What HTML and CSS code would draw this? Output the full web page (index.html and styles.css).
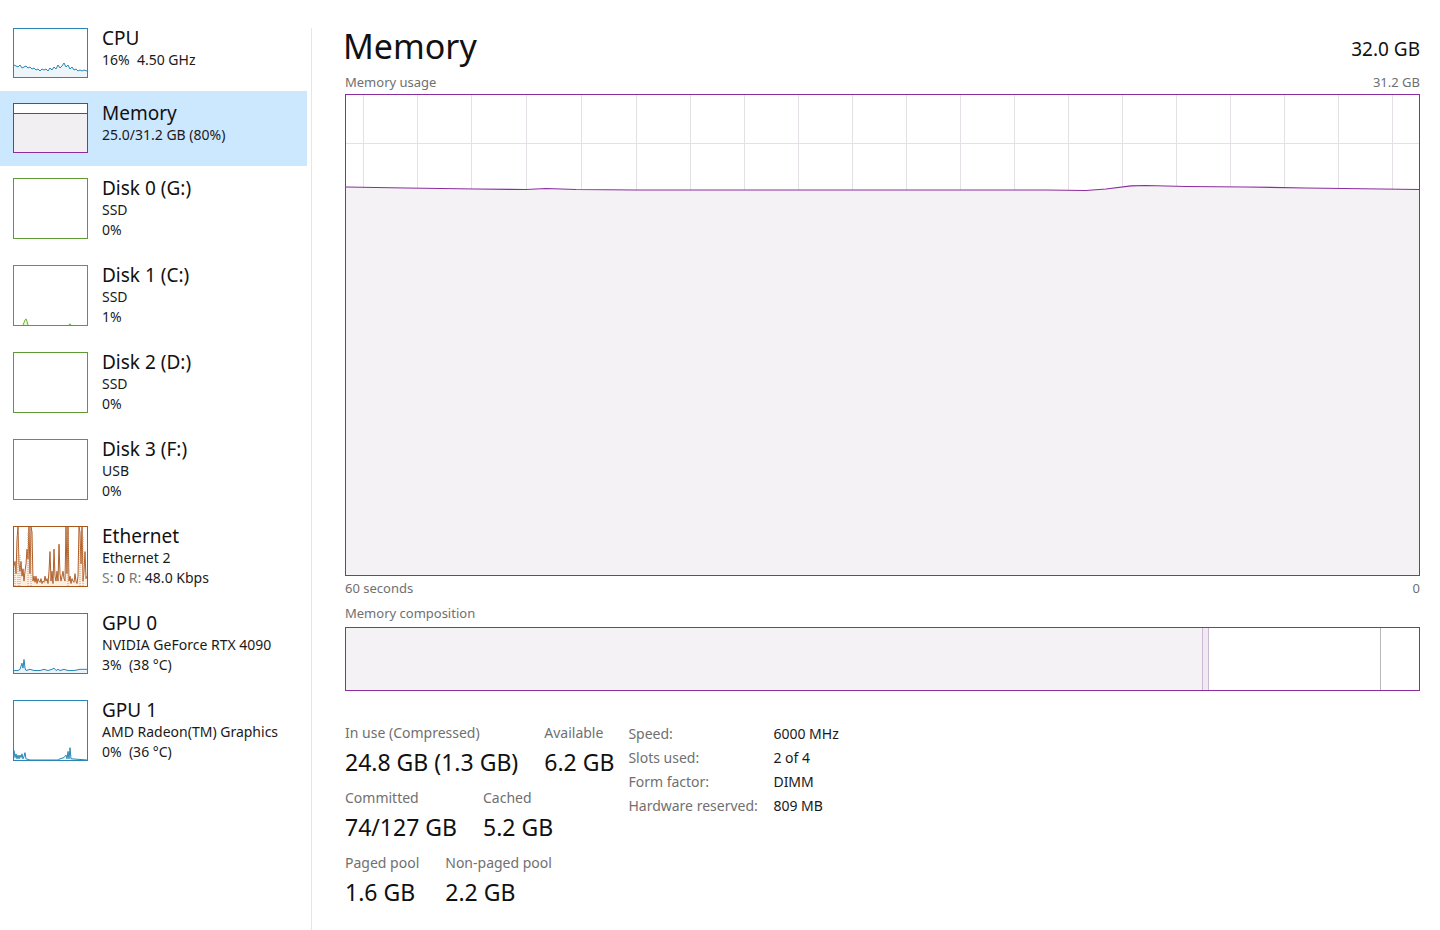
FILE: index.html
```html
<!DOCTYPE html>
<html lang="en">
<head>
<meta charset="utf-8">
<title>Task Manager - Memory</title>
<link rel="stylesheet" href="styles.css">
</head>
<body>
<div class="app">
  <nav class="sidebar">
    <div class="item">
      <div class="thumb thumb-cpu">
        <svg viewBox="0 0 73 48" preserveAspectRatio="none">
          <polygon class="fill-cpu" points="0,48 0,36 2,37 4,38 6,36 8,39 10,38 12,37 14,39 16,38 18,40 20,39 22,41 24,40 26,42 28,40 30,41 32,40 34,42 36,39 38,41 40,38 42,40 44,36 46,39 48,37 50,34 52,38 54,36 56,40 58,38 60,41 62,40 64,42 66,41 68,42 70,41 73,42 73,48"/>
          <polyline class="line-cpu" points="0,36 2,37 4,38 6,36 8,39 10,38 12,37 14,39 16,38 18,40 20,39 22,41 24,40 26,42 28,40 30,41 32,40 34,42 36,39 38,41 40,38 42,40 44,36 46,39 48,37 50,34 52,38 54,36 56,40 58,38 60,41 62,40 64,42 66,41 68,42 70,41 73,42"/>
        </svg>
      </div>
      <div class="info">
        <div class="name">CPU</div>
        <div class="sub">16%&nbsp; 4.50 GHz</div>
      </div>
    </div>
    <div class="item selected">
      <div class="thumb thumb-mem">
        <svg viewBox="0 0 73 48" preserveAspectRatio="none">
          <rect class="fill-mem" x="0" y="9.5" width="73" height="38.5"/>
          <line class="line-mem" x1="0" y1="9.5" x2="73" y2="9.5"/>
        </svg>
      </div>
      <div class="info">
        <div class="name">Memory</div>
        <div class="sub">25.0/31.2 GB (80%)</div>
      </div>
    </div>
    <div class="item tall">
      <div class="thumb thumb-disk"></div>
      <div class="info">
        <div class="name">Disk 0 (G:)</div>
        <div class="sub">SSD</div>
        <div class="sub">0%</div>
      </div>
    </div>
    <div class="item tall">
      <div class="thumb thumb-disk">
        <svg viewBox="0 0 73 48" preserveAspectRatio="none">
          <polyline class="line-disk" points="9,48 10,46 11,44 12,43 13,45 14,48"/>
          <polyline class="line-disk" points="55,48 56,47 57,48"/>
        </svg>
      </div>
      <div class="info">
        <div class="name">Disk 1 (C:)</div>
        <div class="sub">SSD</div>
        <div class="sub">1%</div>
      </div>
    </div>
    <div class="item tall">
      <div class="thumb thumb-disk"></div>
      <div class="info">
        <div class="name">Disk 2 (D:)</div>
        <div class="sub">SSD</div>
        <div class="sub">0%</div>
      </div>
    </div>
    <div class="item tall">
      <div class="thumb thumb-disk"></div>
      <div class="info">
        <div class="name">Disk 3 (F:)</div>
        <div class="sub">USB</div>
        <div class="sub">0%</div>
      </div>
    </div>
    <div class="item tall">
      <div class="thumb thumb-eth">
        <svg viewBox="0 0 73 48" preserveAspectRatio="none">
          <polygon class="fill-eth" points="0,48 0,32 1,28 2,38 3,10 4,0 5,30 6,36 7,28 8,40 9,34 10,44 11,36 12,30 13,18 14,26 15,0 16,38 17,0 18,4 19,44 20,40 21,45 22,40 23,46 24,42 25,44 26,45 27,42 28,46 29,44 30,45 31,40 32,44 33,42 34,46 35,36 36,20 37,44 38,36 39,46 40,18 41,40 42,44 43,36 44,44 45,14 46,38 47,44 48,40 49,36 50,42 51,44 52,0 53,38 54,0 55,44 56,40 57,46 58,42 59,44 60,45 61,38 62,44 63,46 64,40 65,0 66,4 67,30 68,0 69,44 70,36 71,20 72,42 73,40 73,48"/>
          <polyline class="line-eth" points="0,32 1,28 2,38 3,10 4,0 5,30 6,36 7,28 8,40 9,34 10,44 11,36 12,30 13,18 14,26 15,0 16,38 17,0 18,4 19,44 20,40 21,45 22,40 23,46 24,42 25,44 26,45 27,42 28,46 29,44 30,45 31,40 32,44 33,42 34,46 35,36 36,20 37,44 38,36 39,46 40,18 41,40 42,44 43,36 44,44 45,14 46,38 47,44 48,40 49,36 50,42 51,44 52,0 53,38 54,0 55,44 56,40 57,46 58,42 59,44 60,45 61,38 62,44 63,46 64,40 65,0 66,4 67,30 68,0 69,44 70,36 71,20 72,42 73,40"/>
          <polyline class="dot-eth" points="1,48 1,30"/>
          <polyline class="dot-eth" points="4,48 4,6"/>
          <polyline class="dot-eth" points="6,48 6,22"/>
          <polyline class="dot-eth" points="14,48 14,4"/>
          <polyline class="dot-eth" points="17,48 17,6"/>
          <polyline class="dot-eth" points="54,48 54,6"/>
          <polyline class="dot-eth" points="66,48 66,6"/>
          <polyline class="dot-eth" points="69,48 69,8"/>
        </svg>
      </div>
      <div class="info">
        <div class="name">Ethernet</div>
        <div class="sub">Ethernet 2</div>
        <div class="sub"><span class="dim">S:</span> 0 <span class="dim">R:</span> 48.0 Kbps</div>
      </div>
    </div>
    <div class="item tall">
      <div class="thumb thumb-gpu">
        <svg viewBox="0 0 73 48" preserveAspectRatio="none">
          <polygon class="fill-gpu" points="0,48 0,46 4,46 6,45 8,40 9,44 10,37 11,44 12,46 16,45 20,46 26,46 30,45 34,46 38,45 40,44 42,46 44,45 46,46 50,45 54,46 60,46 66,45 73,45 73,48"/>
          <polyline class="line-gpu" points="0,46 4,46 6,45 8,40 9,44 10,37 11,44 12,46 16,45 20,46 26,46 30,45 34,46 38,45 40,44 42,46 44,45 46,46 50,45 54,46 60,46 66,45 73,45"/>
        </svg>
      </div>
      <div class="info">
        <div class="name">GPU 0</div>
        <div class="sub">NVIDIA GeForce RTX 4090</div>
        <div class="sub">3%&nbsp; (38 °C)</div>
      </div>
    </div>
    <div class="item tall">
      <div class="thumb thumb-gpu">
        <svg viewBox="0 0 73 48" preserveAspectRatio="none">
          <polygon class="fill-gpu" points="0,48 0,40 1,46 2,43 3,47 4,44 5,47 6,44 7,46 8,43 9,47 10,45 11,42 12,47 16,48 44,48 46,47 50,46 52,44 53,47 54,41 55,47 56,38 57,47 73,48"/>
          <polyline class="line-gpu" points="0,40 1,46 2,43 3,47 4,44 5,47 6,44 7,46 8,43 9,47 10,45 11,42 12,47 16,48 44,48 46,47 50,46 52,44 53,47 54,41 55,47 56,38 57,47 73,48"/>
        </svg>
      </div>
      <div class="info">
        <div class="name">GPU 1</div>
        <div class="sub">AMD Radeon(TM) Graphics</div>
        <div class="sub">0%&nbsp; (36 °C)</div>
      </div>
    </div>
  </nav>

  <div class="divider"></div>

  <main class="main">
    <header class="head">
      <h1 class="title">Memory</h1>
      <div class="total">32.0 GB</div>
    </header>

    <div class="chart-labels">
      <span>Memory usage</span>
      <span>31.2 GB</span>
    </div>
    <div class="chart">
      <svg class="chart-svg" viewBox="0 0 1073 480" preserveAspectRatio="none">
        <g class="grid">
          <line x1="17.5" y1="0" x2="17.5" y2="480"/>
          <line x1="71.5" y1="0" x2="71.5" y2="480"/>
          <line x1="125.5" y1="0" x2="125.5" y2="480"/>
          <line x1="180.5" y1="0" x2="180.5" y2="480"/>
          <line x1="235.5" y1="0" x2="235.5" y2="480"/>
          <line x1="290.5" y1="0" x2="290.5" y2="480"/>
          <line x1="344.5" y1="0" x2="344.5" y2="480"/>
          <line x1="398.5" y1="0" x2="398.5" y2="480"/>
          <line x1="452.5" y1="0" x2="452.5" y2="480"/>
          <line x1="506.5" y1="0" x2="506.5" y2="480"/>
          <line x1="560.5" y1="0" x2="560.5" y2="480"/>
          <line x1="614.5" y1="0" x2="614.5" y2="480"/>
          <line x1="668.5" y1="0" x2="668.5" y2="480"/>
          <line x1="722.5" y1="0" x2="722.5" y2="480"/>
          <line x1="776.5" y1="0" x2="776.5" y2="480"/>
          <line x1="830.5" y1="0" x2="830.5" y2="480"/>
          <line x1="884.5" y1="0" x2="884.5" y2="480"/>
          <line x1="938.5" y1="0" x2="938.5" y2="480"/>
          <line x1="992.5" y1="0" x2="992.5" y2="480"/>
          <line x1="1046.5" y1="0" x2="1046.5" y2="480"/>
          <line x1="0" y1="48.5" x2="1073" y2="48.5"/>
          <line x1="0" y1="96.5" x2="1073" y2="96.5"/>
          <line x1="0" y1="144.5" x2="1073" y2="144.5"/>
          <line x1="0" y1="192.5" x2="1073" y2="192.5"/>
          <line x1="0" y1="240.5" x2="1073" y2="240.5"/>
          <line x1="0" y1="288.5" x2="1073" y2="288.5"/>
          <line x1="0" y1="336.5" x2="1073" y2="336.5"/>
          <line x1="0" y1="384.5" x2="1073" y2="384.5"/>
          <line x1="0" y1="432.5" x2="1073" y2="432.5"/>
        </g>
        <polygon class="usage-fill" points="0,480 0,92 60,93 130,94 180,94.5 200,93.5 230,94.5 290,95 700,95 740,95.5 760,94 785,90.8 800,90.5 840,91.5 900,92 960,93 1073,94.5 1073,480"/>
        <polyline class="usage-line" points="0,92 60,93 130,94 180,94.5 200,93.5 230,94.5 290,95 700,95 740,95.5 760,94 785,90.8 800,90.5 840,91.5 900,92 960,93 1073,94.5"/>
      </svg>
    </div>
    <div class="chart-labels axis">
      <span>60 seconds</span>
      <span>0</span>
    </div>

    <div class="chart-labels comp-label">
      <span>Memory composition</span>
    </div>
    <div class="composition">
      <div class="seg seg-inuse"></div>
      <div class="seg seg-modified"></div>
      <div class="seg seg-standby"></div>
      <div class="seg seg-free"></div>
    </div>

    <section class="stats">
      <div class="stat-grid">
        <div class="stat-row">
          <div class="stat"><div class="label">In use (Compressed)</div><div class="value">24.8 GB (1.3 GB)</div></div>
          <div class="stat"><div class="label">Available</div><div class="value">6.2 GB</div></div>
        </div>
        <div class="stat-row">
          <div class="stat"><div class="label">Committed</div><div class="value">74/127 GB</div></div>
          <div class="stat"><div class="label">Cached</div><div class="value">5.2 GB</div></div>
        </div>
        <div class="stat-row">
          <div class="stat"><div class="label">Paged pool</div><div class="value">1.6 GB</div></div>
          <div class="stat"><div class="label">Non-paged pool</div><div class="value">2.2 GB</div></div>
        </div>
      </div>
      <dl class="props">
        <dt>Speed:</dt><dd>6000 MHz</dd>
        <dt>Slots used:</dt><dd>2 of 4</dd>
        <dt>Form factor:</dt><dd>DIMM</dd>
        <dt>Hardware reserved:</dt><dd>809 MB</dd>
      </dl>
    </section>
  </main>
</div>
</body>
</html>
```

FILE: styles.css
```css
html, body {
  margin: 0;
  padding: 0;
  background: #ffffff;
}

body {
  font-family: "Noto Sans", "Open Sans", "DejaVu Sans", sans-serif;
  color: #1a1a1a;
  width: 1440px;
  height: 930px;
  overflow: hidden;
}

.app {
  display: flex;
  height: 930px;
}

/* ---------- sidebar ---------- */
.sidebar {
  width: 307px;
  flex: none;
  padding-top: 16px;
}

.item {
  display: flex;
  align-items: flex-start;
  height: 75px;
  box-sizing: border-box;
  padding: 12px 0 0 13px;
}

.item.tall {
  height: 87px;
}

.item.selected {
  background: #cce8ff;
}

.thumb {
  width: 75px;
  height: 50px;
  box-sizing: border-box;
  border: 1px solid #117dbb;
  background: #fff;
  flex: none;
}

.item.tall .thumb {
  height: 61px;
}

.thumb svg {
  display: block;
  width: 73px;
  height: 48px;
}

.item.tall .thumb svg {
  height: 59px;
}

.thumb svg polyline,
.thumb svg line {
  vector-effect: non-scaling-stroke;
}

.thumb-cpu { border-color: #2a86b5; }
.thumb-mem { border-color: #8b2d9e; }
.thumb-disk { border-color: #5f9a34; }
.thumb-eth { border-color: #a7571a; }
.thumb-gpu { border-color: #2a86b5; }

.fill-cpu { fill: #eef5fa; }
.line-cpu { fill: none; stroke: #2a86b5; stroke-width: 1; }
.fill-mem { fill: #f1eff2; }
.line-mem { stroke: #8b2d9e; stroke-width: 1; }
.line-disk { fill: #e8f3dc; stroke: #66b52a; stroke-width: 1; }
.fill-eth { fill: #fbeee2; }
.line-eth { fill: none; stroke: #b0602a; stroke-width: 1; }
.dot-eth { fill: none; stroke: #d29a6a; stroke-width: 1; stroke-dasharray: 1 1; }
.fill-gpu { fill: #eaf3f9; }
.line-gpu { fill: none; stroke: #2a86b5; stroke-width: 1; }

.info {
  margin-left: 14px;
  margin-top: -2px;
}

.name {
  font-size: 19px;
  line-height: 24px;
  color: #111;
}

.sub {
  font-size: 14px;
  line-height: 20px;
  color: #1a1a1a;
}

.dim {
  color: #7a7a7a;
}

/* ---------- divider ---------- */
.divider {
  width: 1px;
  flex: none;
  margin: 28px 0 0 4px;
  background: #e6e6e6;
}

/* ---------- main ---------- */
.main {
  flex: 1;
  min-width: 0;
  padding: 23px 20px 0 33px;
}

.head {
  display: flex;
  justify-content: space-between;
  align-items: baseline;
}

.title {
  margin: 0 0 0 -2px;
  font-size: 34px;
  font-weight: 400;
  line-height: 46px;
  color: #111;
}

.total {
  font-size: 19px;
  color: #111;
  position: relative;
  top: -3px;
}

.chart-labels {
  display: flex;
  justify-content: space-between;
  font-size: 13px;
  line-height: 18px;
  color: #707070;
  margin-top: 4px;
}

.chart-labels.axis {
  margin-top: 3px;
}

.chart-labels.comp-label {
  margin-top: 7px;
}

.chart {
  margin-top: 3px;
  height: 482px;
  box-sizing: border-box;
  border: 1px solid #8b2d9e;
}

.chart-svg {
  display: block;
  width: 100%;
  height: 480px;
}

.grid line {
  stroke: #e4e0e6;
  stroke-width: 1;
}

.usage-fill {
  fill: #f4f2f4;
}

.usage-line {
  fill: none;
  stroke: #8b2d9e;
  stroke-width: 1.2;
}

.composition {
  margin-top: 5px;
  height: 64px;
  box-sizing: border-box;
  border: 1px solid #8b2d9e;
  display: flex;
}

.seg-inuse {
  width: 856px;
  background: #f4f2f4;
}

.seg-modified {
  width: 5px;
  background: #f1eaf3;
  border-left: 1px solid #cbb9d1;
  border-right: 1px solid #cbb9d1;
}

.seg-standby {
  width: 171px;
  background: #fff;
  border-right: 1px solid #b8b8b8;
}

.seg-free {
  flex: 1;
  background: #fff;
}

/* ---------- stats ---------- */
.stats {
  display: flex;
  margin-top: 31px;
}

.stat-row {
  display: flex;
  gap: 26px;
  margin-bottom: 7px;
}

.label {
  font-size: 14px;
  line-height: 22px;
  color: #707070;
}

.value {
  font-size: 23px;
  line-height: 36px;
  color: #111;
}

.props {
  margin: 0 0 0 14px;
  display: grid;
  grid-template-columns: 145px auto;
  grid-auto-rows: 24px;
  align-content: start;
  font-size: 14px;
  line-height: 24px;
}

.props dt {
  color: #707070;
}

.props dd {
  margin: 0;
  color: #1a1a1a;
}
```
